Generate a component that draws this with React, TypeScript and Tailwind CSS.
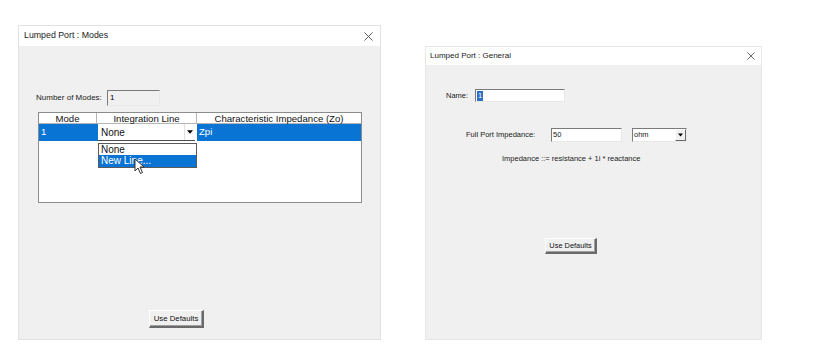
import React from "react";

const font = { fontFamily: '"Liberation Sans", Arial, sans-serif' };

function CloseX({ size }: { size: number }) {
  return (
    <svg width={size} height={size} viewBox="0 0 10 10" className="shrink-0">
      <path d="M0.5 0.5 L9.5 9.5 M9.5 0.5 L0.5 9.5" stroke="#4a4a4a" strokeWidth="1" fill="none" />
    </svg>
  );
}

function Arrow({ w = 7 }: { w?: number }) {
  return (
    <svg width={w} height={4} viewBox="0 0 7 4">
      <path d="M0 0 L7 0 L3.5 4 Z" fill="#000" />
    </svg>
  );
}

function Button({ label, w, h, text }: { label: string; w: string; h: string; text: string }) {
  return (
    <div
      className={`${w} ${h} ${text} flex items-center justify-center bg-[#f0f0f0] border-t border-l border-t-white border-l-white border-r-2 border-b-2 border-r-[#6a6a6a] border-b-[#6a6a6a] text-[#111] shadow-[inset_-1px_-1px_0_#a0a0a0]`}
    >
      {label}
    </div>
  );
}

export default function App() {
  return (
    <div className="w-[828px] h-[359px] bg-white flex items-start overflow-hidden" style={font}>
      {/* Left dialog */}
      <div className="ml-[18px] mt-[25px] w-[363px] h-[315px] flex flex-col border border-[#e2e2e2]">
        <div className="h-[20px] bg-white flex items-center justify-between pl-[5px] pr-[7px]">
          <span className="text-[8.8px] text-[#1a1a1a]">Lumped Port : Modes</span>
          <CloseX size={9} />
        </div>
        <div className="flex-1 bg-[#f0f0f0] flex flex-col">
          <div className="mt-[44px] pl-[17px] flex items-center">
            <span className="w-[71px] text-[8px] text-[#1a1a1a]">Number of Modes:</span>
            <div className="w-[53px] h-[16px] bg-[#f0f0f0] border-t border-l border-t-[#7a7a7a] border-l-[#7a7a7a] border-b border-r border-b-[#e8e8e8] border-r-[#e8e8e8] flex items-center pl-[2px] text-[8px]">
              1
            </div>
          </div>
          {/* Table */}
          <div className="mt-[6px] ml-[19px] w-[324px] h-[91px] relative bg-white border border-[#8c8c8c] text-[9.6px] text-[#111]">
            <div className="h-[11px] flex border-b border-[#b5b5b5] leading-[11px]">
              <div className="w-[58px] text-center border-r border-[#b5b5b5]">Mode</div>
              <div className="w-[100px] text-center border-r border-[#b5b5b5]">Integration Line</div>
              <div className="flex-1 text-center">Characteristic Impedance (Zo)</div>
            </div>
            <div className="h-[17px] flex bg-[#0a74d4] text-white">
              <div className="w-[59px] pl-[2px] flex items-center">1</div>
              <div className="w-[97px] bg-white text-[#111] flex items-center justify-between border-b border-[#4a4a4a]">
                <span className="pl-[3px] text-[10px]">None</span>
                <div className="w-[11px] h-full flex items-center justify-center border-l border-[#e0e0e0]">
                  <Arrow w={6} />
                </div>
              </div>
              <div className="flex-1 pl-[2px] flex items-center border-l-2 border-white">Zpi</div>
            </div>
            {/* Dropdown list overlay */}
            <div className="absolute left-[59px] top-[30px] w-[99px] h-[25px] bg-white border border-[#5a5a5a] text-[10px] flex flex-col">
              <div className="h-[11px] pl-[2px] leading-[11px] text-[#111]">None</div>
              <div className="h-[12px] pl-[2px] leading-[12px] bg-[#0a74d4] text-white">New Line...</div>
            </div>
            {/* Cursor */}
            <svg className="absolute left-[95px] top-[45px]" width="12" height="17" viewBox="0 0 12 17">
              <path d="M1 1 L1 13 L4 10 L6.5 15.5 L8.5 14.5 L6 9 L10 9 Z" fill="#fff" stroke="#333" strokeWidth="1" strokeLinejoin="round" />
            </svg>
          </div>
          <div className="mt-[107px] ml-[130px]">
            <Button label="Use Defaults" w="w-[55px]" h="h-[18px]" text="text-[7.8px]" />
          </div>
        </div>
      </div>

      {/* Right dialog */}
      <div className="ml-[44px] mt-[46px] w-[337px] h-[294px] flex flex-col border border-[#e6e6e6]">
        <div className="h-[18px] bg-white flex items-center justify-between pl-[4px] pr-[6px]">
          <span className="text-[8px] text-[#1a1a1a]">Lumped Port : General</span>
          <CloseX size={8} />
        </div>
        <div className="flex-1 bg-[#f0f0f0] flex flex-col text-[7.5px] text-[#1a1a1a]">
          <div className="mt-[24px] pl-[20px] flex items-center">
            <span className="w-[29px]">Name:</span>
            <div className="w-[90px] h-[13px] bg-white border-t border-l border-t-[#7a7a7a] border-l-[#7a7a7a] border-b border-r border-b-[#e8e8e8] border-r-[#e8e8e8] flex items-center pl-[1px]">
              <span className="bg-[#2f6fc4] text-white px-[1px] leading-[10px]">1</span>
            </div>
          </div>
          <div className="mt-[26px] pl-[40px] flex items-center">
            <span className="w-[85px]">Full Port Impedance:</span>
            <div className="w-[71px] h-[14px] bg-white border-t border-l border-t-[#7a7a7a] border-l-[#7a7a7a] border-b border-r border-b-[#e8e8e8] border-r-[#e8e8e8] flex items-center pl-[1px]">
              50
            </div>
            <div className="ml-[10px] w-[55px] h-[14px] bg-white border-t border-l border-t-[#7a7a7a] border-l-[#7a7a7a] border-b border-r border-b-[#e8e8e8] border-r-[#e8e8e8] flex items-center justify-between">
              <span className="pl-[1px]">ohm</span>
              <div className="w-[11px] h-[12px] bg-[#f0f0f0] border-t border-l border-white border-r border-b border-r-[#6a6a6a] border-b-[#6a6a6a] flex items-center justify-center">
                <Arrow w={5} />
              </div>
            </div>
          </div>
          <div className="mt-[11px] pl-[76px] text-[#222]">Impedance ::= resistance + 1i * reactance</div>
          <div className="mt-[74px] ml-[119px]">
            <Button label="Use Defaults" w="w-[52px]" h="h-[16px]" text="text-[7.4px]" />
          </div>
        </div>
      </div>
    </div>
  );
}
